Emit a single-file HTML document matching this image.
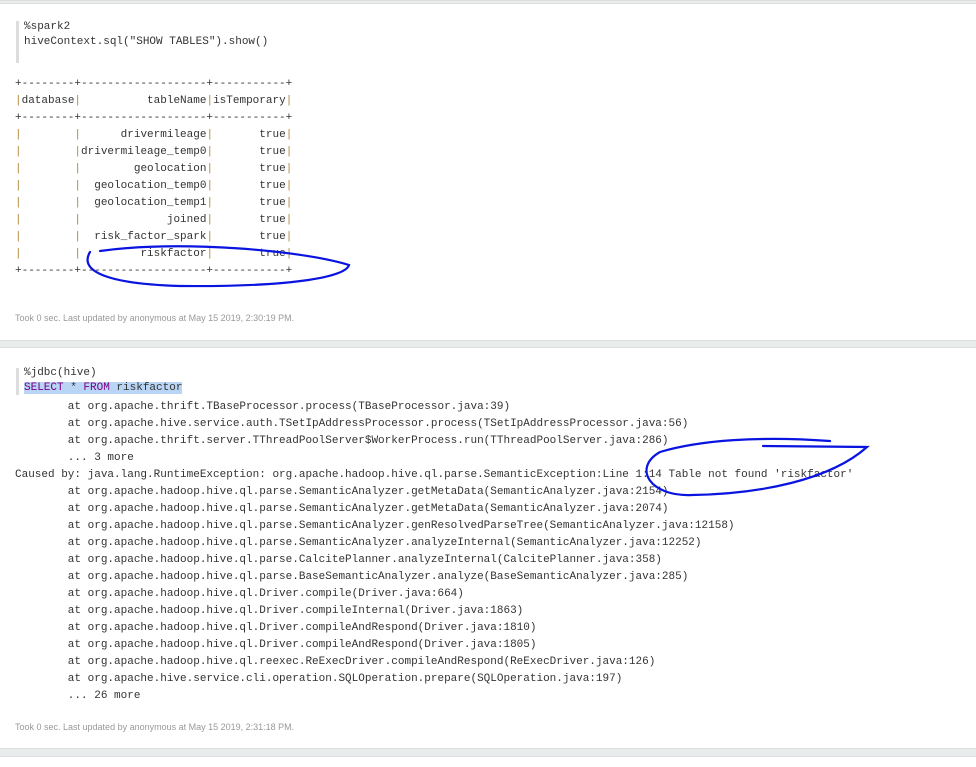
<!DOCTYPE html>
<html><head><meta charset="utf-8"><style>
body{margin:0;width:976px;height:767px;background:#fff;position:relative;overflow:hidden;font-family:"Liberation Mono",monospace;}
.band{position:absolute;left:0;width:976px;background:#e9ecec;border-top:1px solid #ddd;border-bottom:1px solid #ddd;box-sizing:border-box}
pre{margin:0;position:absolute;font-family:"Liberation Mono",monospace;font-size:11px;color:#333}
.code{left:24px;line-height:15px}
.bar{position:absolute;left:16px;width:3px;background:#ddd}
.out{left:15px;line-height:17px}
.foot{position:absolute;left:15px;font-family:"Liberation Sans",sans-serif;font-size:9px;color:#999}
.p{color:#b0883a}
.kw{color:#708}
</style></head><body>
<div class="band" style="top:0;height:4px"></div>
<div class="bar" style="top:21px;height:42px"></div>
<pre class="code" style="top:20px">%spark2
hiveContext.sql("SHOW TABLES").show()</pre>
<pre class="out" style="top:76px">+--------+-------------------+-----------+
<span class="p">|</span>database<span class="p">|</span>          tableName<span class="p">|</span>isTemporary<span class="p">|</span>
+--------+-------------------+-----------+
<span class="p">|</span>        <span class="p">|</span>      drivermileage<span class="p">|</span>       true<span class="p">|</span>
<span class="p">|</span>        <span class="p">|</span>drivermileage_temp0<span class="p">|</span>       true<span class="p">|</span>
<span class="p">|</span>        <span class="p">|</span>        geolocation<span class="p">|</span>       true<span class="p">|</span>
<span class="p">|</span>        <span class="p">|</span>  geolocation_temp0<span class="p">|</span>       true<span class="p">|</span>
<span class="p">|</span>        <span class="p">|</span>  geolocation_temp1<span class="p">|</span>       true<span class="p">|</span>
<span class="p">|</span>        <span class="p">|</span>             joined<span class="p">|</span>       true<span class="p">|</span>
<span class="p">|</span>        <span class="p">|</span>  risk_factor_spark<span class="p">|</span>       true<span class="p">|</span>
<span class="p">|</span>        <span class="p">|</span>         riskfactor<span class="p">|</span>       true<span class="p">|</span>
+--------+-------------------+-----------+</pre>
<div class="foot" style="top:313px">Took 0 sec. Last updated by anonymous at May 15 2019, 2:30:19 PM.</div>
<div class="band" style="top:340px;height:8px"></div>
<div class="bar" style="top:368px;height:27px"></div>
<pre class="code" style="top:366px">%jdbc(hive)
<span style="background:#b9d4f5"><span class="kw">SELECT</span> * <span class="kw">FROM</span> riskfactor</span></pre>
<pre class="out" style="top:399px">        at org.apache.thrift.TBaseProcessor.process(TBaseProcessor.java:39)
        at org.apache.hive.service.auth.TSetIpAddressProcessor.process(TSetIpAddressProcessor.java:56)
        at org.apache.thrift.server.TThreadPoolServer$WorkerProcess.run(TThreadPoolServer.java:286)
        ... 3 more
Caused by: java.lang.RuntimeException: org.apache.hadoop.hive.ql.parse.SemanticException:Line 1:14 Table not found 'riskfactor'
        at org.apache.hadoop.hive.ql.parse.SemanticAnalyzer.getMetaData(SemanticAnalyzer.java:2154)
        at org.apache.hadoop.hive.ql.parse.SemanticAnalyzer.getMetaData(SemanticAnalyzer.java:2074)
        at org.apache.hadoop.hive.ql.parse.SemanticAnalyzer.genResolvedParseTree(SemanticAnalyzer.java:12158)
        at org.apache.hadoop.hive.ql.parse.SemanticAnalyzer.analyzeInternal(SemanticAnalyzer.java:12252)
        at org.apache.hadoop.hive.ql.parse.CalcitePlanner.analyzeInternal(CalcitePlanner.java:358)
        at org.apache.hadoop.hive.ql.parse.BaseSemanticAnalyzer.analyze(BaseSemanticAnalyzer.java:285)
        at org.apache.hadoop.hive.ql.Driver.compile(Driver.java:664)
        at org.apache.hadoop.hive.ql.Driver.compileInternal(Driver.java:1863)
        at org.apache.hadoop.hive.ql.Driver.compileAndRespond(Driver.java:1810)
        at org.apache.hadoop.hive.ql.Driver.compileAndRespond(Driver.java:1805)
        at org.apache.hadoop.hive.ql.reexec.ReExecDriver.compileAndRespond(ReExecDriver.java:126)
        at org.apache.hive.service.cli.operation.SQLOperation.prepare(SQLOperation.java:197)
        ... 26 more</pre>
<div class="foot" style="top:722px">Took 0 sec. Last updated by anonymous at May 15 2019, 2:31:18 PM.</div>
<div class="band" style="top:748px;height:9px"></div>
<svg width="976" height="767" style="position:absolute;left:0;top:0" fill="none" stroke="#0a14e0" stroke-width="2.2" stroke-linecap="round">
<path d="M100 251 C180 240 300 250 349 265 C346 276 300 287 180 286 C110 284 78 272 90 252"/>
<path d="M830 441 C760 436 700 440 660 452 C632 468 650 497 692 495 C760 494 830 480 867 447 L763 446"/>
</svg>
</body></html>
